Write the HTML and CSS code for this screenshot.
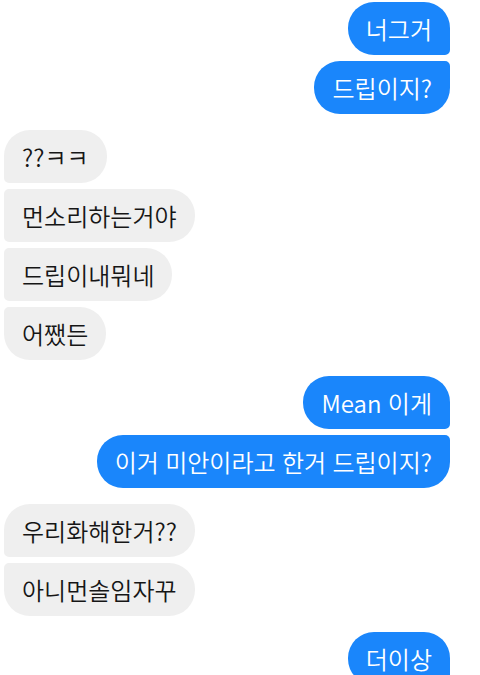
FILE: index.html
```html
<html>
  <head>
    <meta charset="utf-8" />
    <link rel="stylesheet" href="styles.css">
  </head>
  <body>
    <div class="chat">
      <div class="group sent">
        <div class="bubble first">너그거</div>
        <div class="bubble last">드립이지?</div>
      </div>

      <div class="group received">
        <div class="bubble first">??ㅋㅋ</div>
        <div class="bubble">먼소리하는거야</div>
        <div class="bubble">드립이내뭐네</div>
        <div class="bubble last">어쨌든</div>
      </div>

      <div class="group sent">
        <div class="bubble first">Mean 이게</div>
        <div class="bubble last">이거 미안이라고 한거 드립이지?</div>
      </div>

      <div class="group received">
        <div class="bubble first">우리화해한거??</div>
        <div class="bubble last">아니먼솔임자꾸</div>
      </div>

      <div class="group sent">
        <div class="bubble first">더이상</div>
      </div>
    </div>
  </body>
</html>
```

FILE: styles.css
```css
*,
*::before,
*::after {
  padding: 0;
  margin: 0;
  box-sizing: border-box;
}

body {
  background-color: #fff;
  font-family: "Noto Sans CJK KR", "Noto Sans", sans-serif;
  overflow: hidden;
}

.chat {
  display: flex;
  flex-direction: column;
  gap: 16px;
  padding: 2px 30px 0 4px;
}

.group {
  display: flex;
  flex-direction: column;
  gap: 6px;
}

.sent {
  align-items: flex-end;
}

.received {
  align-items: flex-start;
}

.bubble {
  height: 53px;
  display: flex;
  align-items: center;
  padding: 0 18px 1px 18px;
  font-size: 24px;
  font-weight: 350;
  letter-spacing: 0;
  word-spacing: 1px;
  white-space: nowrap;
  border-radius: 26px;
}

.sent .bubble {
  background-color: #1a86fb;
  color: #fff;
  border-top-right-radius: 5px;
  border-bottom-right-radius: 5px;
}

.sent .bubble.first {
  border-top-right-radius: 26px;
}

.sent .bubble.last {
  border-bottom-right-radius: 26px;
}

.received .bubble {
  background-color: #efefef;
  color: #161616;
  border-top-left-radius: 5px;
  border-bottom-left-radius: 5px;
}

.received .bubble.first {
  border-top-left-radius: 26px;
}

.received .bubble.last {
  border-bottom-left-radius: 26px;
}
```
